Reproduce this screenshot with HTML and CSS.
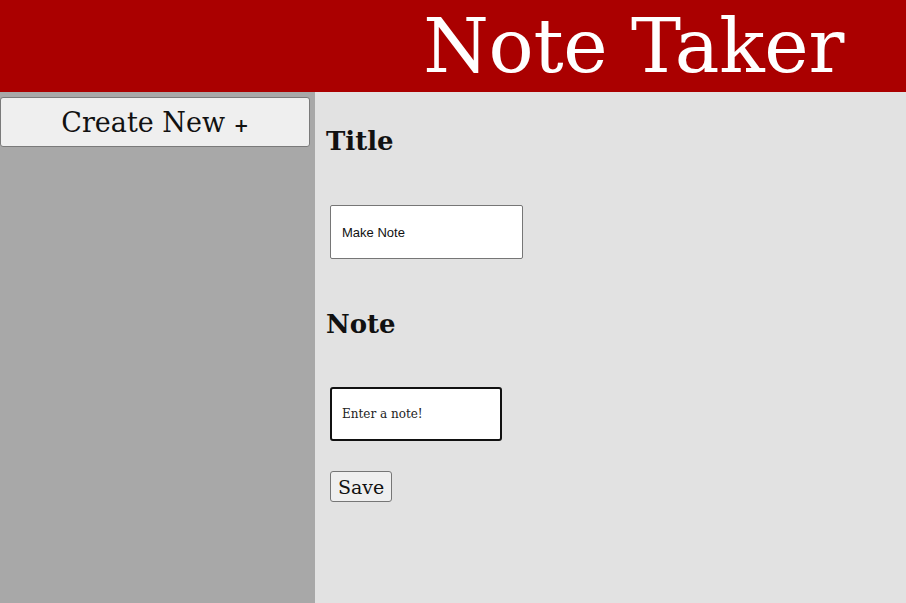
FILE: index.html
```html
<!DOCTYPE html>
<html>
<head>
<meta charset="utf-8">
<link rel="stylesheet" href="styles.css">
</head>
<body>
<header class="top">
  <h1 class="brand">Note Taker</h1>
</header>
<div class="layout">
  <aside class="side">
    <button class="create">Create New <span class="plus">+</span></button>
  </aside>
  <main class="main">
    <h2 class="label">Title</h2>
    <input class="field title-field" type="text" value="Make Note">
    <h2 class="label note-label">Note</h2>
    <div class="field note-field">Enter a note!</div>
    <button class="save">Save</button>
  </main>
</div>
</body>
</html>
```
FILE: styles.css
```css
html, body {
  margin: 0;
  padding: 0;
  height: 100%;
}
body {
  font-family: "DejaVu Serif", serif;
  background: #e2e2e2;
  display: flex;
  flex-direction: column;
}
.top {
  background: #aa0000;
  height: 92px;
  display: flex;
  justify-content: flex-end;
  align-items: center;
  padding-right: 62px;
  box-sizing: border-box;
}
.brand {
  margin: 0;
  color: #fff;
  font-weight: normal;
  font-size: 75px;
  letter-spacing: -0.3px;
  line-height: 1;
}
.layout {
  flex: 1;
  display: flex;
}
.side {
  width: 315px;
  background: #a8a8a8;
  padding-top: 5px;
  box-sizing: border-box;
}
.create {
  width: 310px;
  height: 50px;
  background: #efefef;
  border: 1px solid #7a7a7a;
  border-radius: 3px;
  font-family: "DejaVu Serif", serif;
  font-size: 27px;
  color: #111;
  padding: 0;
  display: block;
}
.plus {
  font-size: 18px;
  font-weight: bold;
}
.main {
  flex: 1;
  padding: 0 0 0 11px;
  display: flex;
  flex-direction: column;
  align-items: flex-start;
}
.label {
  font-size: 26px;
  font-weight: bold;
  margin: 34px 0 0 0;
  line-height: 30px;
  color: #111;
}
.note-label {
  margin-top: 50px;
}
.field {
  box-sizing: border-box;
  margin-left: 4px;
  height: 54px;
  background: #fff;
}
.title-field {
  margin-top: 49px;
  width: 193px;
  border: 1px solid #767676;
  border-radius: 2px;
  padding: 0 11px;
  font-family: "Liberation Sans", Arial, sans-serif;
  font-size: 13px;
  color: #111;
}
.note-field {
  margin-top: 48px;
  width: 172px;
  border: 2px solid #111;
  border-radius: 3px;
  padding: 0 10px;
  display: flex;
  align-items: center;
  font-size: 12px;
  color: #222;
}
.save {
  margin: 30px 0 0 4px;
  height: 31px;
  padding: 0 7px;
  font-family: "DejaVu Serif", serif;
  font-size: 19px;
  background: #efefef;
  border: 1px solid #767676;
  border-radius: 3px;
  color: #111;
}
```
